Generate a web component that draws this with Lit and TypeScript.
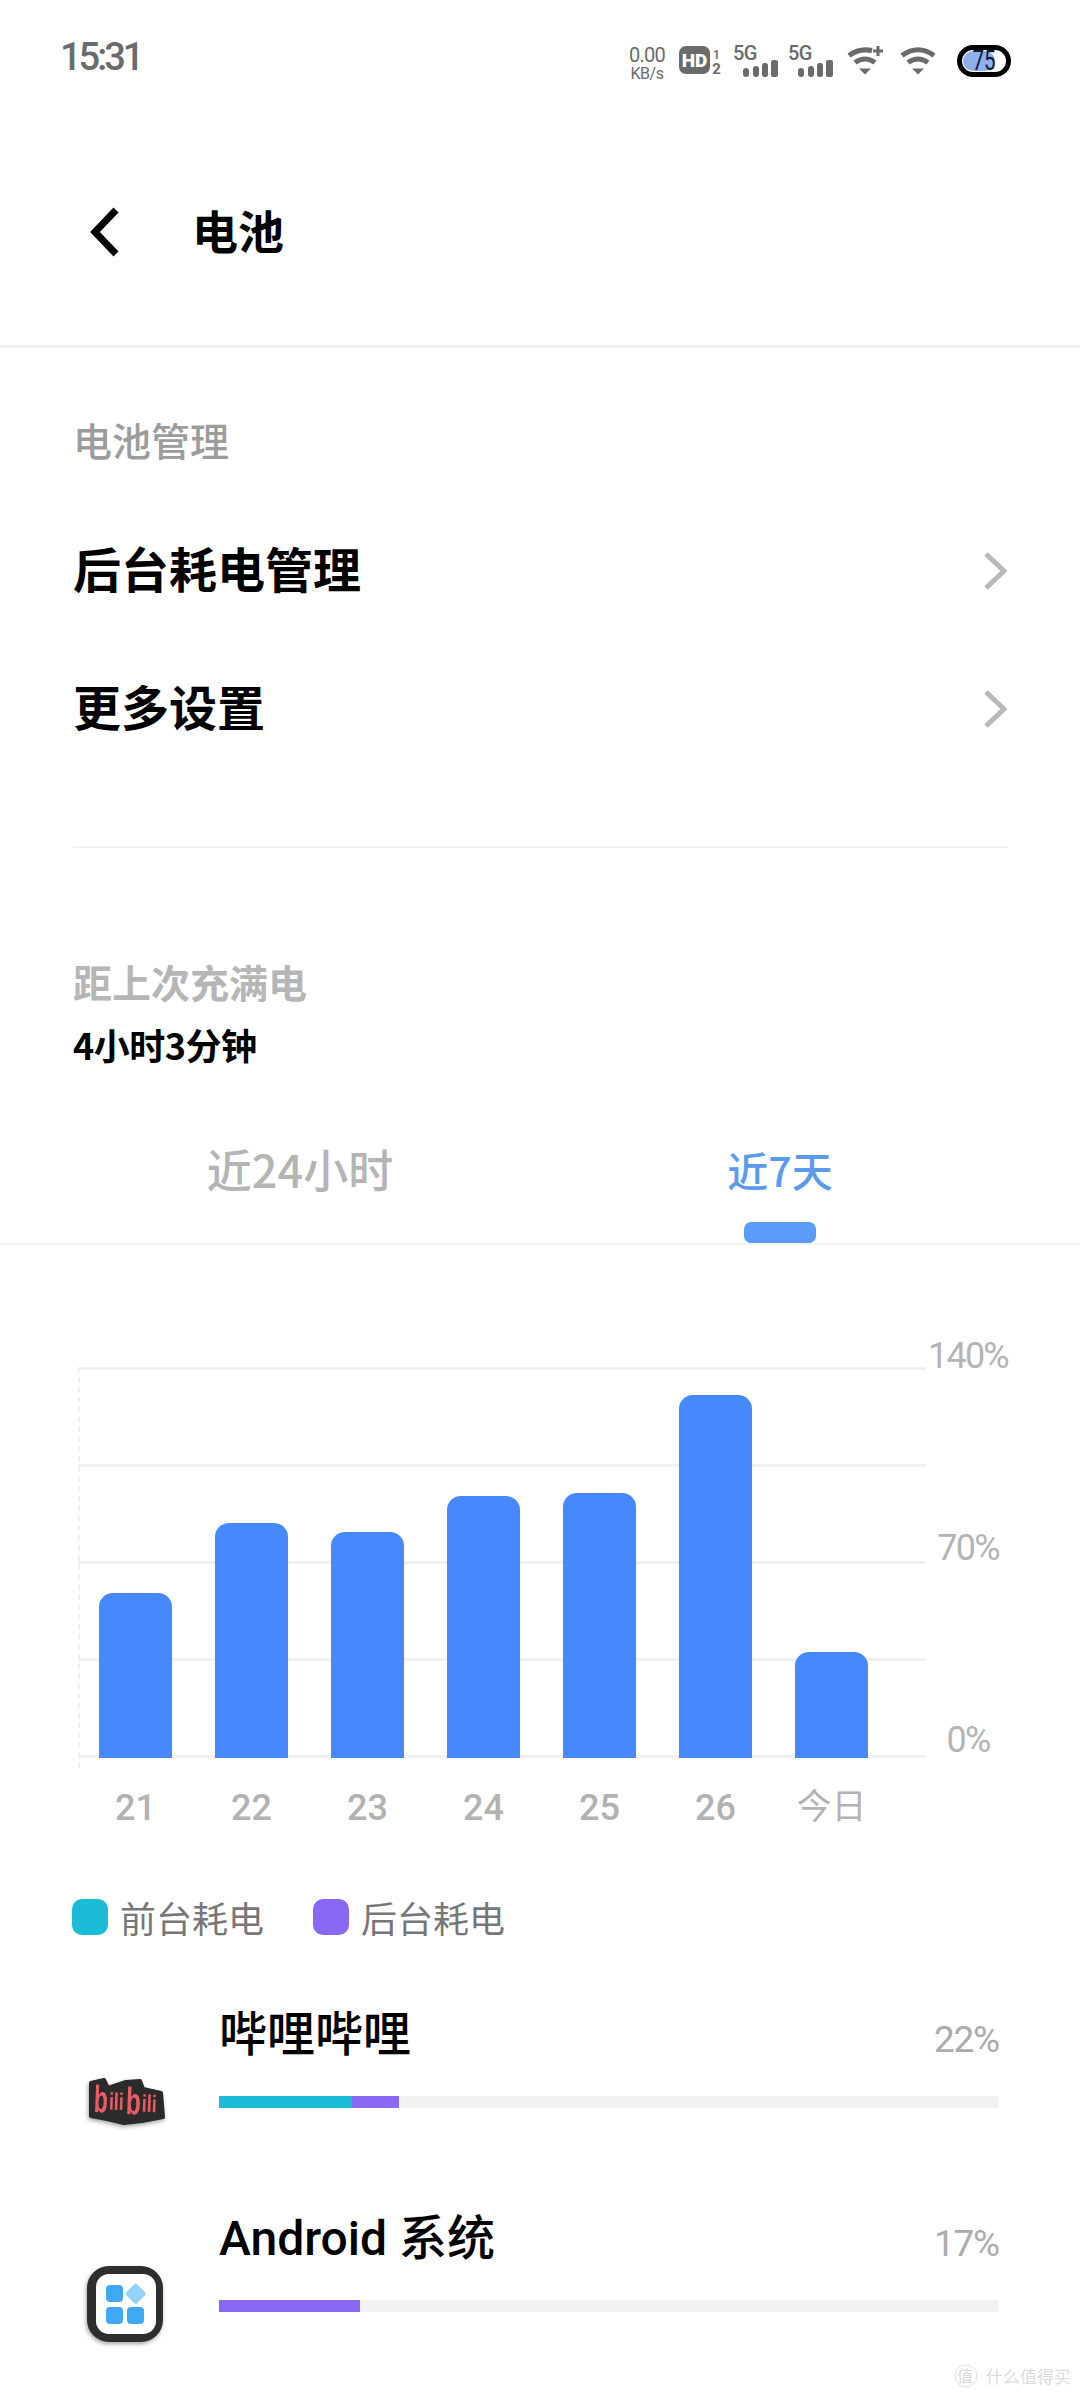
import { LitElement, html, css, svg } from 'lit';
import { customElement } from 'lit/decorators.js';

interface BarDay {
  label: string;
  top: number;
}

interface AppUsage {
  name: string;
  percent: string;
  foreground: number;
  background: number;
  icon: 'bilibili' | 'android';
}

const CHART_HEIGHT = 391;

const DAYS: BarDay[] = [
  { label: '21', top: 226 },
  { label: '22', top: 156 },
  { label: '23', top: 165 },
  { label: '24', top: 129 },
  { label: '25', top: 126 },
  { label: '26', top: 28 },
  { label: '今日', top: 285 },
];

const APPS: AppUsage[] = [
  { name: '哔哩哔哩', percent: '22%', foreground: 133, background: 47, icon: 'bilibili' },
  { name: 'Android 系统', percent: '17%', foreground: 0, background: 141, icon: 'android' },
];

// status bar glyphs share one grey
const signal = () => html`
  <svg class="sig" width="45" height="38" viewBox="0 0 45 38">
    <text x="0" y="20" font-size="20" font-weight="500" fill="#6b6b6b" font-family="Roboto, sans-serif" letter-spacing="-0.6">5G</text>
    <rect x="10" y="28" width="6" height="9" rx="3" fill="#6b6b6b" />
    <rect x="20" y="26" width="6" height="11" rx="3" fill="#6b6b6b" />
    <rect x="29" y="23" width="6" height="14" rx="2.5" fill="#6b6b6b" />
    <rect x="38" y="20" width="7" height="17" rx="2" fill="#6b6b6b" />
  </svg>
`;

const wifiLower = svg`
  <path d="M8 17.5 Q18 10.5 28 17.5" fill="none" stroke="#6b6b6b" stroke-width="5" />
  <path d="M12 23.5 L24 23.5 L18 29.5 Z" fill="#6b6b6b" />
`;

@customElement('app-root')
export class AppRoot extends LitElement {
  static styles = css`
    :host {
      display: block;
      position: relative;
      width: 1080px;
      height: 2400px;
      overflow: hidden;
      background: #fff;
      color: #000;
      font-family: 'Noto Sans CJK SC', 'Noto Sans', sans-serif;
    }

    .status {
      height: 116px;
      box-sizing: border-box;
      padding: 37px 69px 0 60px;
      display: flex;
      justify-content: space-between;
      align-items: flex-start;
    }

    .time {
      font: 500 38px/40px Roboto, sans-serif;
      color: #6b6b6b;
      letter-spacing: -3px;
    }

    .status-icons {
      display: flex;
      align-items: flex-start;
      margin-top: 8px;
    }

    .speed {
      width: 38px;
      margin-right: 13px;
      color: #6b6b6b;
      font-family: Roboto, sans-serif;
      text-align: center;
    }

    .speed div:first-child {
      font-size: 20px;
      line-height: 20px;
      letter-spacing: -0.8px;
    }

    .speed div:last-child {
      font-size: 16px;
      line-height: 16px;
      margin-top: 1px;
      letter-spacing: -0.5px;
    }

    .sig {
      margin: -5px 0 0 10px;
      flex: none;
    }

    .header {
      height: 232px;
      box-sizing: border-box;
      padding-left: 88px;
      display: flex;
      align-items: center;
      border-bottom: 3px solid #f0f0f0;
      padding-bottom: 3px;
    }

    .header svg {
      flex: none;
      margin-top: 5px;
    }

    .title {
      font-size: 46px;
      line-height: 60px;
      font-weight: 700;
      margin-left: 70px;
    }

    .section-title {
      margin: 66px 0 34px 73px;
      font-size: 39px;
      line-height: 50px;
      color: #9c9c9c;
      font-weight: 500;
    }

    .row {
      height: 138px;
      padding: 0 73px;
      display: flex;
      align-items: center;
      justify-content: space-between;
      font-size: 48px;
      font-weight: 700;
    }

    .row svg {
      margin-top: 8px;
    }

    .divider {
      margin: 72px 72px 0 73px;
      height: 2px;
      background: #f1f1f1;
    }

    .since-label {
      margin: 108px 0 0 73px;
      font-size: 39px;
      line-height: 50px;
      font-weight: 700;
      color: #b6b6b6;
    }

    .since-value {
      margin: 16px 0 0 73px;
      font-size: 36px;
      line-height: 44px;
      font-weight: 700;
      letter-spacing: -0.5px;
    }

    .tabs {
      display: flex;
      padding: 78px 60px 0;
      border-bottom: 2px solid #f3f3f3;
    }

    .tab {
      flex: 1;
      display: flex;
      flex-direction: column;
      align-items: center;
      font-size: 45px;
      line-height: 50px;
      font-weight: 500;
      color: #b4b4b4;
    }

    .tab.active {
      color: #5a9bef;
      font-size: 41px;
    }

    .tab-mark {
      width: 72px;
      height: 21px;
      margin-top: 28px;
      border-radius: 7px;
    }

    .tab.active .tab-mark {
      background: #5b9cf8;
    }

    .chart {
      display: flex;
      align-items: flex-start;
      padding: 91px 0 0 78px;
    }

    .plot {
      position: relative;
      width: 848px;
      height: 391px;
      margin-top: 31px;
      flex: none;
    }

    .grid {
      position: absolute;
      inset: 0;
      display: flex;
      flex-direction: column;
      justify-content: space-between;
    }

    .grid i {
      display: block;
      height: 3px;
      background: #f1f1f1;
    }

    .y-dash {
      position: absolute;
      left: 0;
      top: 0;
      bottom: -10px;
      border-left: 2px dashed #f0f0f0;
    }

    .bars {
      position: relative;
      height: 100%;
      box-sizing: border-box;
      padding-left: 21px;
      display: flex;
      gap: 43px;
      align-items: flex-end;
    }

    .bar {
      width: 73px;
      background: #4688fd;
      border-radius: 14px 14px 0 0;
    }

    .y-axis {
      width: 84px;
      height: 424px;
      display: flex;
      flex-direction: column;
      justify-content: space-between;
      align-items: center;
      font: 400 36px/40px Roboto, sans-serif;
      letter-spacing: -1.8px;
      color: #b4b4b4;
    }

    .x-axis {
      display: flex;
      gap: 43px;
      padding-left: 99px;
      margin-top: 28px;
    }

    .x-axis span {
      width: 73px;
      text-align: center;
      font-family: Roboto, 'Noto Sans CJK SC', sans-serif;
      font-size: 36px;
      line-height: 40px;
      font-weight: 500;
      color: #b2b2b2;
    }

    .x-axis span.word {
      font-size: 35px;
      font-weight: 400;
    }

    .legend {
      display: flex;
      align-items: center;
      margin: 69px 0 0 72px;
      height: 40px;
      font-size: 36px;
      color: #777;
    }

    .swatch {
      width: 36px;
      height: 36px;
      border-radius: 10px;
      margin-right: 12px;
    }

    .legend span + .swatch {
      margin-left: 49px;
    }

    .teal {
      background: #19bbd6;
    }

    .violet {
      background: #8868f5;
    }

    .apps {
      margin-top: 71px;
      padding: 0 81px 0 84px;
    }

    .app {
      display: flex;
      margin-bottom: 104px;
    }

    .app-icon {
      width: 135px;
      height: 12px;
      align-self: flex-end;
      display: flex;
      align-items: center;
      flex: none;
    }

    .app-icon svg {
      flex: none;
      filter: drop-shadow(-1px 2px 2px rgba(0, 0, 0, 0.35));
    }

    .app-body {
      flex: 1;
    }

    .app-head {
      display: flex;
      justify-content: space-between;
      align-items: flex-start;
      height: 50px;
      margin-bottom: 38px;
    }

    .app-name {
      padding-top: 2px;
      font-size: 48px;
      line-height: 50px;
      font-weight: 500;
      font-family: Roboto, 'Noto Sans CJK SC', sans-serif;
    }

    .app-percent {
      font: 400 37px/40px Roboto, sans-serif;
      color: #ababab;
      margin-top: 12px;
      letter-spacing: -1.2px;
    }

    .track {
      display: flex;
      height: 12px;
      background: #f2f2f2;
    }

    .watermark {
      position: absolute;
      right: 9px;
      bottom: 11px;
      display: flex;
      align-items: center;
      gap: 8px;
      font-size: 17px;
      line-height: 22px;
      color: #dcdcdc;
    }
  `;

  private renderStatus() {
    return html`
      <div class="status">
        <div class="time">15:31</div>
        <div class="status-icons">
          <div class="speed"><div>0.00</div><div>KB/s</div></div>
          <svg width="44" height="36" viewBox="0 0 44 36" style="flex:none">
            <rect x="0" y="1" width="31" height="28" rx="7" fill="#6b6b6b" />
            <text x="15.5" y="22" text-anchor="middle" font-size="19" font-weight="900" fill="#fff" font-family="Roboto, sans-serif">HD</text>
            <text x="37.5" y="14" text-anchor="middle" font-size="13" font-weight="500" fill="#6b6b6b" font-family="Roboto, sans-serif">1</text>
            <text x="37.5" y="29" text-anchor="middle" font-size="15" font-weight="700" fill="#6b6b6b" font-family="Roboto, sans-serif">2</text>
          </svg>
          ${signal()} ${signal()}
          <svg width="37" height="30" viewBox="0 0 37 30" style="flex:none;margin-left:14px">
            <path d="M2 10.5 Q12 3 25 5.5" fill="none" stroke="#6b6b6b" stroke-width="5" />
            ${wifiLower}
            <path d="M31 1 V11 M26 6 H36" stroke="#6b6b6b" stroke-width="3" fill="none" />
          </svg>
          <svg width="37" height="30" viewBox="0 0 37 30" style="flex:none;margin-left:16px">
            <path d="M2 10.5 Q18 -1 34 10.5" fill="none" stroke="#6b6b6b" stroke-width="5" />
            ${wifiLower}
          </svg>
          <svg width="54" height="34" viewBox="0 0 54 34" style="flex:none;margin-left:20px">
            <rect x="6" y="6" width="32" height="20" rx="10" fill="#8fb0ee" />
            <rect x="2.5" y="2.5" width="49" height="27" rx="13.5" fill="none" stroke="#000" stroke-width="5" />
            <text x="27" y="25" text-anchor="middle" font-size="27" fill="#0c1a33" font-family="Roboto, sans-serif" textLength="23" lengthAdjust="spacingAndGlyphs">75</text>
          </svg>
        </div>
      </div>
    `;
  }

  private renderChevron(color: string) {
    return html`
      <svg width="24" height="38" viewBox="0 0 24 38">
        <path d="M3 2 L21 19 L3 36" fill="none" stroke=${color} stroke-width="5" />
      </svg>
    `;
  }

  private renderAppIcon(kind: AppUsage['icon']) {
    if (kind === 'bilibili') {
      return html`
        <svg width="84" height="60" viewBox="0 0 84 60" style="margin-left:-2px;margin-top:-6px">
          <path d="M9 14 L22 11 L26 19 L44 13 L58 12 L61 20 L79 24 L81 48 L60 52 L42 54 L25 50 L9 47 Z" fill="#2c2b2b" stroke="#2c2b2b" stroke-width="4" stroke-linejoin="round" />
          <g fill="#ea5c64" font-weight="700" font-family="'Liberation Sans', sans-serif" transform="rotate(2 42 30)">
            <text x="12" y="44" font-size="38" textLength="14" lengthAdjust="spacingAndGlyphs">b</text>
            <text x="27" y="41" font-size="24" textLength="15" lengthAdjust="spacingAndGlyphs">ili</text>
            <text x="44" y="45" font-size="38" textLength="15" lengthAdjust="spacingAndGlyphs">b</text>
            <text x="60" y="42" font-size="24" textLength="15" lengthAdjust="spacingAndGlyphs">ili</text>
          </g>
        </svg>
      `;
    }
    return html`
      <svg width="84" height="84" viewBox="0 0 84 84" style="margin-top:2px">
        <rect x="3" y="1" width="76" height="76" rx="22" fill="#2e2e31" />
        <rect x="12" y="9" width="60" height="60" rx="13" fill="#fff" />
        <rect x="22" y="20" width="17" height="17" rx="4" fill="#3fa9f5" />
        <rect x="22" y="42" width="17" height="17" rx="4" fill="#3fa9f5" />
        <rect x="43" y="42" width="17" height="17" rx="4" fill="#3fa9f5" />
        <rect x="44" y="21" width="15.5" height="15.5" rx="2.5" fill="#93d2fa" transform="rotate(45 51.7 28.7)" />
      </svg>
    `;
  }

  render() {
    return html`
      ${this.renderStatus()}

      <div class="header">
        <svg width="34" height="50" viewBox="0 0 34 50">
          <path d="M28 3 L7 25 L28 47" fill="none" stroke="#000" stroke-width="7" />
        </svg>
        <div class="title">电池</div>
      </div>

      <div class="section-title">电池管理</div>
      <div class="row"><span>后台耗电管理</span>${this.renderChevron('#b8b8b8')}</div>
      <div class="row"><span>更多设置</span>${this.renderChevron('#b8b8b8')}</div>
      <div class="divider"></div>

      <div class="since-label">距上次充满电</div>
      <div class="since-value">4小时3分钟</div>

      <div class="tabs">
        <div class="tab"><span>近24小时</span><div class="tab-mark"></div></div>
        <div class="tab active"><span>近7天</span><div class="tab-mark"></div></div>
      </div>

      <div class="chart">
        <div class="plot">
          <div class="grid"><i></i><i></i><i></i><i></i><i></i></div>
          <div class="y-dash"></div>
          <div class="bars">
            ${DAYS.map(d => html`<div class="bar" style="height: ${CHART_HEIGHT - d.top}px"></div>`)}
          </div>
        </div>
        <div class="y-axis"><span>140%</span><span>70%</span><span>0%</span></div>
      </div>

      <div class="x-axis">
        ${DAYS.map(d => html`<span class=${d.label === '今日' ? 'word' : ''}>${d.label}</span>`)}
      </div>

      <div class="legend">
        <div class="swatch teal"></div><span>前台耗电</span>
        <div class="swatch violet"></div><span>后台耗电</span>
      </div>

      <div class="apps">
        ${APPS.map(app => html`
          <div class="app">
            <div class="app-icon">${this.renderAppIcon(app.icon)}</div>
            <div class="app-body">
              <div class="app-head">
                <span class="app-name">${app.name}</span>
                <span class="app-percent">${app.percent}</span>
              </div>
              <div class="track">
                <div class="teal" style="width: ${app.foreground}px"></div>
                <div class="violet" style="width: ${app.background}px"></div>
              </div>
            </div>
          </div>
        `)}
      </div>

      <div class="watermark">
        <svg width="24" height="26" viewBox="0 0 24 26">
          <circle cx="12" cy="13" r="11" fill="none" stroke="#e0e0e0" stroke-width="1" />
          <text x="11" y="19" text-anchor="middle" font-size="16" fill="#d8d8d8">值</text>
        </svg>
        <span>什么值得买</span>
      </div>
    `;
  }
}
